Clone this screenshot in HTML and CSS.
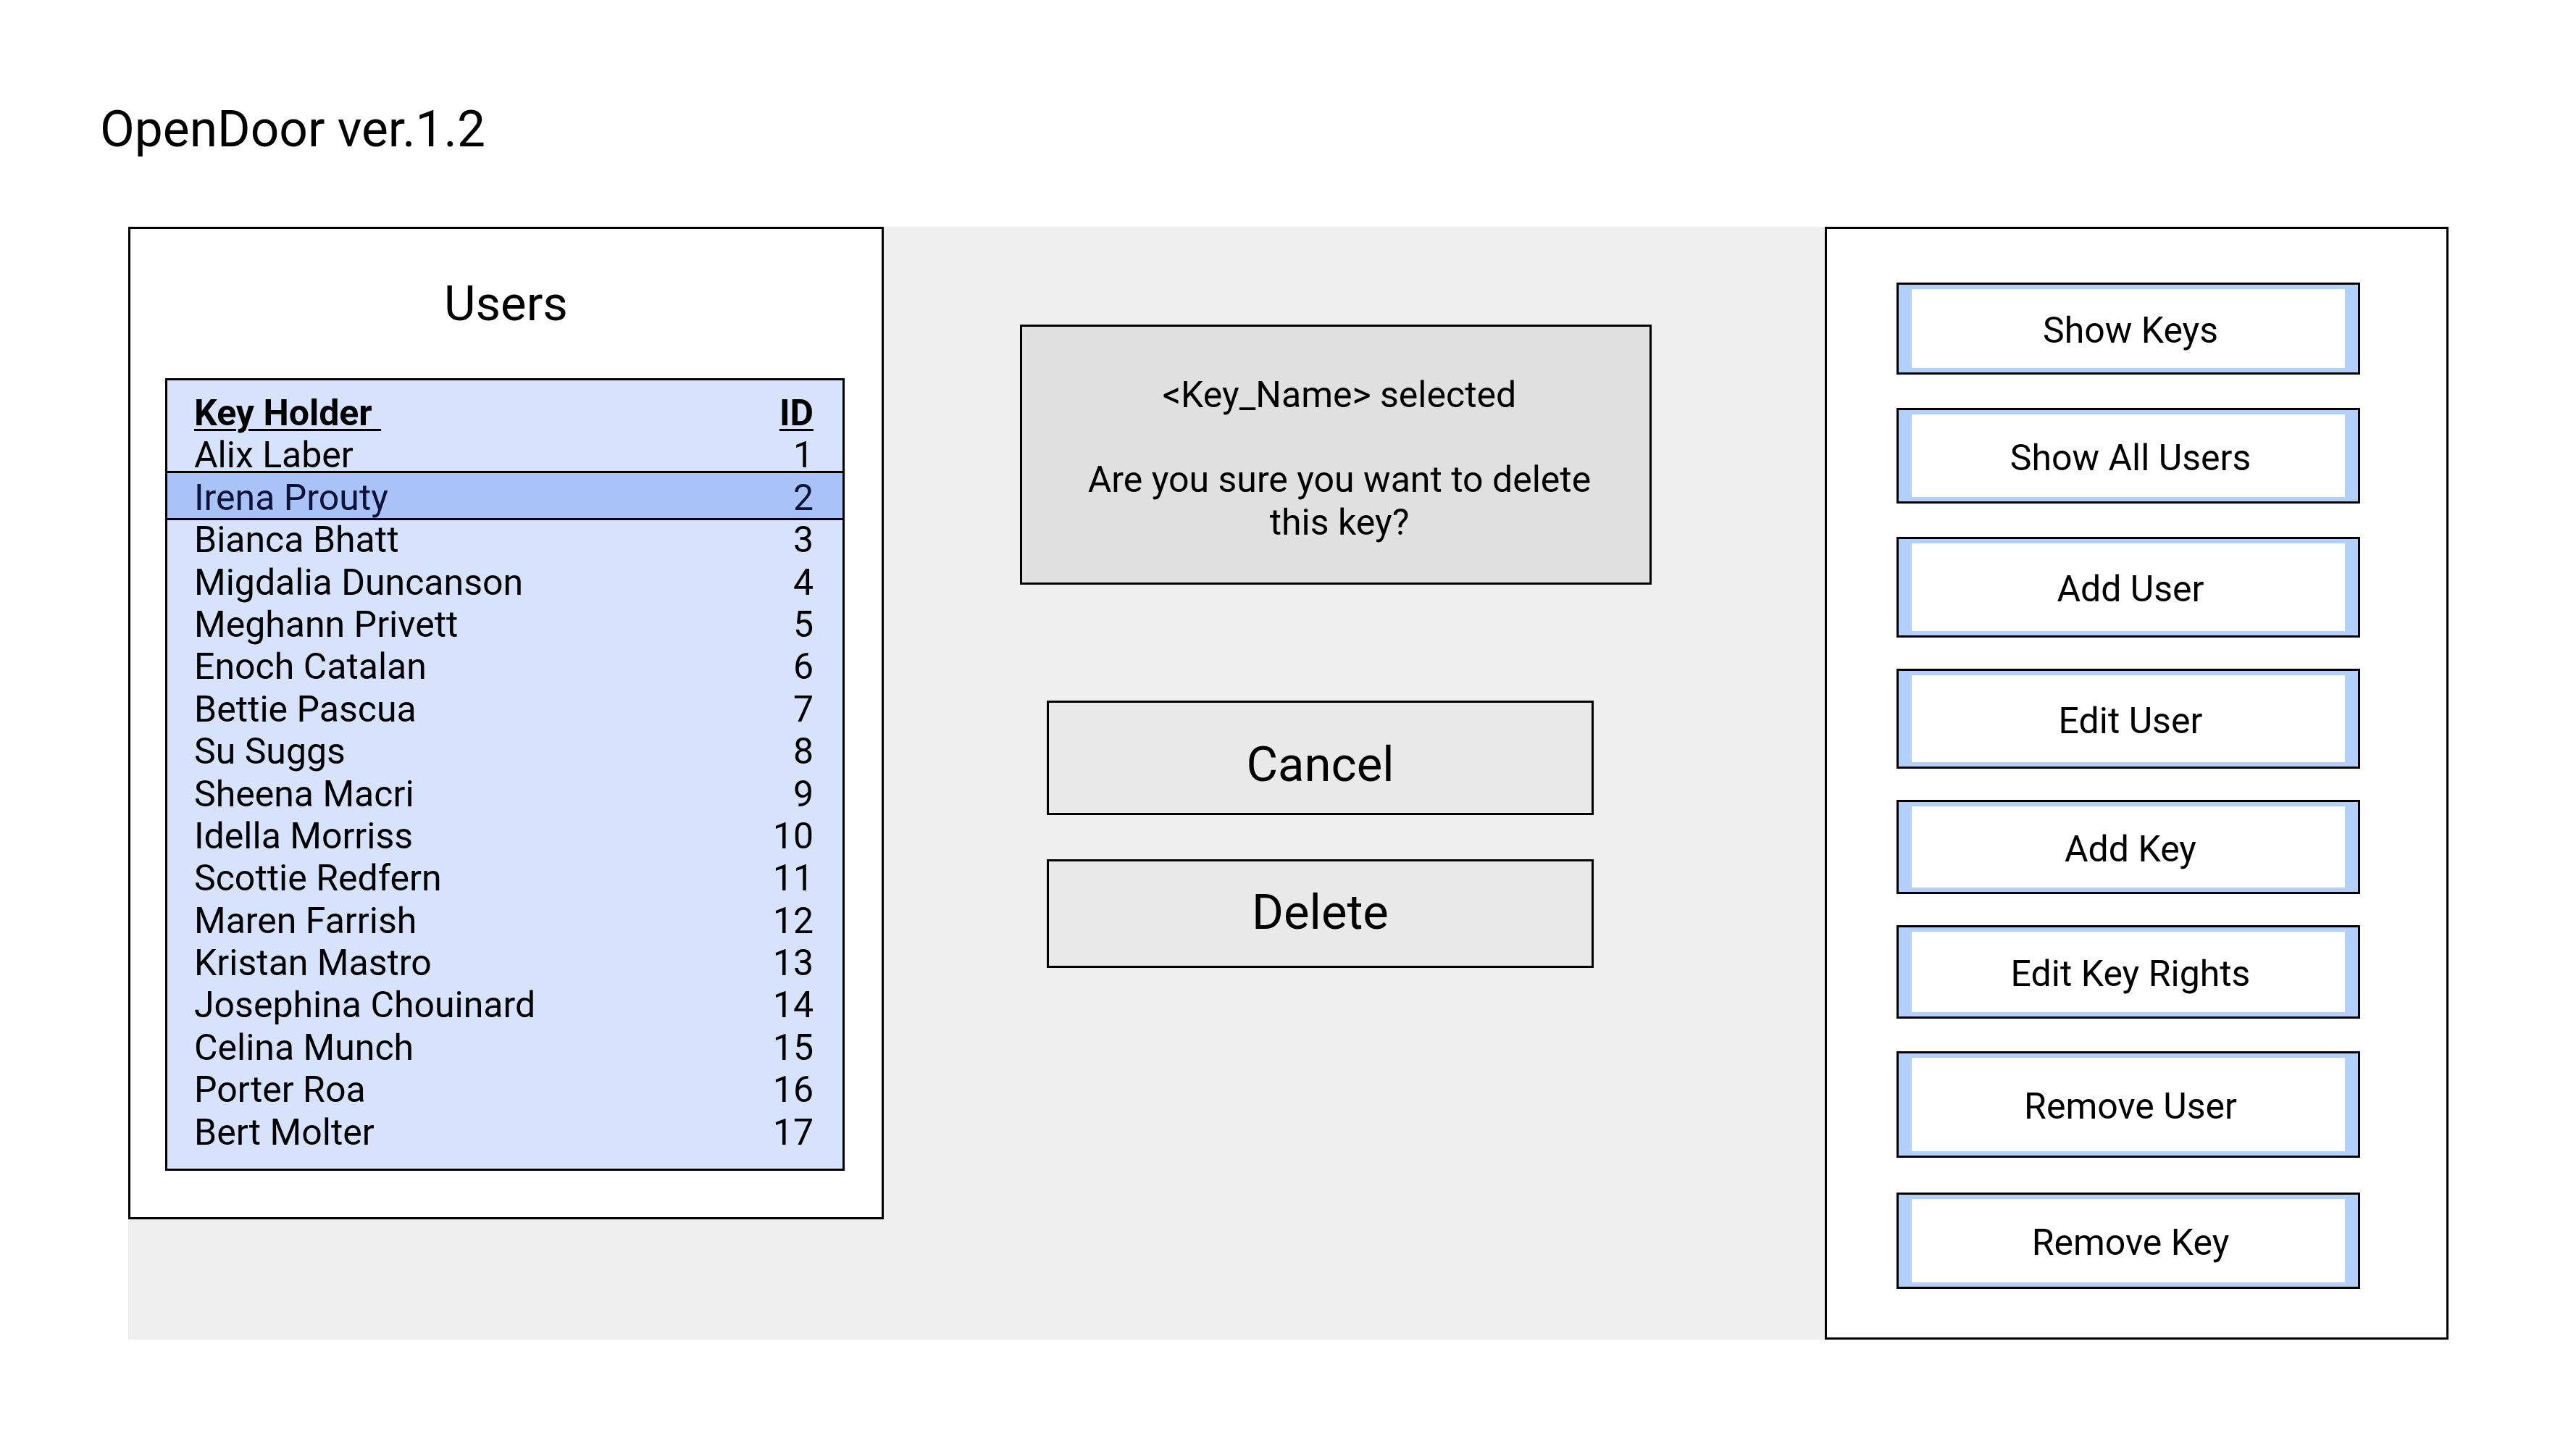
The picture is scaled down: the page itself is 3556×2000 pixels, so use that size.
FILE: index.html
```html
<!DOCTYPE html>
<html lang="en">
<head>
<meta charset="utf-8">
<title>OpenDoor ver.1.2</title>
<link rel="stylesheet" href="styles.css">
</head>
<body>
<h1 class="title">OpenDoor ver.1.2</h1>
<main class="stage">
  <section class="users-panel">
    <h2 class="users-title">Users</h2>
    <div class="user-table">
      <div class="row head"><span class="u">Key Holder&nbsp;</span><span class="u">ID</span></div>
      <div class="row"><span>Alix Laber</span><span>1</span></div>
      <div class="row selected"><span>Irena Prouty</span><span>2</span></div>
      <div class="row"><span>Bianca Bhatt</span><span>3</span></div>
      <div class="row"><span>Migdalia Duncanson</span><span>4</span></div>
      <div class="row"><span>Meghann Privett</span><span>5</span></div>
      <div class="row"><span>Enoch Catalan</span><span>6</span></div>
      <div class="row"><span>Bettie Pascua</span><span>7</span></div>
      <div class="row"><span>Su Suggs</span><span>8</span></div>
      <div class="row"><span>Sheena Macri</span><span>9</span></div>
      <div class="row"><span>Idella Morriss</span><span>10</span></div>
      <div class="row"><span>Scottie Redfern</span><span>11</span></div>
      <div class="row"><span>Maren Farrish</span><span>12</span></div>
      <div class="row"><span>Kristan Mastro</span><span>13</span></div>
      <div class="row"><span>Josephina Chouinard</span><span>14</span></div>
      <div class="row"><span>Celina Munch</span><span>15</span></div>
      <div class="row"><span>Porter Roa</span><span>16</span></div>
      <div class="row"><span>Bert Molter</span><span>17</span></div>
    </div>
  </section>
  <section class="center">
    <div class="dialog">
      <p>&lt;Key_Name&gt; selected</p>
      <p class="question">Are you sure you want to delete<br>this key?</p>
    </div>
    <div class="action cancel">Cancel</div>
    <div class="action delete">Delete</div>
  </section>
  <aside class="menu">
    <div class="menu-btn"><div class="menu-face">Show Keys</div></div>
    <div class="menu-btn"><div class="menu-face">Show All Users</div></div>
    <div class="menu-btn"><div class="menu-face">Add User</div></div>
    <div class="menu-btn"><div class="menu-face">Edit User</div></div>
    <div class="menu-btn"><div class="menu-face">Add Key</div></div>
    <div class="menu-btn"><div class="menu-face">Edit Key Rights</div></div>
    <div class="menu-btn"><div class="menu-face">Remove User</div></div>
    <div class="menu-btn"><div class="menu-face">Remove Key</div></div>
  </aside>
</main>
</body>
</html>
```

FILE: styles.css
```css
* {
  box-sizing: border-box;
}

body {
  margin: 0;
  width: 3556px;
  height: 2000px;
  overflow: hidden;
  background: #ffffff;
  color: #000000;
  font-family: Roboto, "Liberation Sans", sans-serif;
}

.title {
  margin: 0;
  height: 313px;
  padding: 137px 0 0 138px;
  font-size: 69.5px;
  font-weight: 400;
  line-height: 83px;
}

.stage {
  display: flex;
  align-items: flex-start;
  margin-left: 177px;
  width: 3203px;
  height: 1536px;
  background: #f0eff0;
}

/* Users panel */
.users-panel {
  width: 1043px;
  height: 1370px;
  border: 3px solid #000;
  background: #ffffff;
  padding-top: 64px;
}

.users-title {
  margin: 0 0 64px;
  font-size: 67px;
  font-weight: 400;
  line-height: 78px;
  text-align: center;
}

.user-table {
  margin-left: 48px;
  width: 938px;
  height: 1094px;
  border: 3px solid #000;
  background: #d7e3fc;
  padding-top: 16px;
}

.row {
  display: flex;
  justify-content: space-between;
  height: 58.4px;
  padding: 0 40px 0 37px;
  font-size: 50px;
  line-height: 58.4px;
  white-space: nowrap;
}

.row.head {
  font-weight: 700;
}

.u {
  text-decoration: underline;
  text-decoration-thickness: 3px;
  text-underline-offset: 5px;
}

.row.selected {
  margin: -8px -3px -1.6px;
  height: 68px;
  border: 3px solid #000;
  padding: 5px 40px 0 37px;
  background: #a9c3f8;
  color: #0d1238;
}

/* Center column */
.center {
  display: flex;
  flex-direction: column;
  align-items: flex-start;
  width: 1299px;
  height: 100%;
  padding-top: 135px;
}

.dialog {
  margin-left: 188px;
  width: 872px;
  height: 359px;
  border: 3px solid #000;
  background: #e0e0e0;
  padding: 65px 0 0 10px;
  text-align: center;
  font-size: 50px;
  line-height: 58.5px;
}

.dialog p {
  margin: 0;
}

.dialog .question {
  margin-top: 58.5px;
}

.action {
  display: flex;
  align-items: center;
  justify-content: center;
  margin-left: 225px;
  width: 755px;
  border: 3px solid #000;
  background: #e9e9e9;
  font-size: 67px;
  line-height: 78px;
}

.cancel {
  margin-top: 160px;
  height: 158px;
  padding-top: 17px;
}

.delete {
  margin-top: 61px;
  height: 150px;
  padding-bottom: 5px;
}

/* Right menu */
.menu {
  width: 861px;
  height: 1536px;
  border: 3px solid #000;
  background: #ffffff;
  padding-left: 96px;
}

.menu-btn {
  width: 640px;
  border: 3px solid #000;
  background: #b3cffb;
  padding: 6px 18px;
}

.menu-face {
  display: flex;
  align-items: center;
  justify-content: center;
  height: 100%;
  background: #ffffff;
  padding: 6px 0 0 6px;
  font-size: 50px;
  line-height: 58.5px;
}

.menu-btn:nth-child(1) { margin-top: 74px; height: 127px; }
.menu-btn:nth-child(2) { margin-top: 46px; height: 132px; }
.menu-btn:nth-child(3) { margin-top: 46px; height: 139px; }
.menu-btn:nth-child(4) { margin-top: 43px; height: 138px; }
.menu-btn:nth-child(5) { margin-top: 43px; height: 130px; }
.menu-btn:nth-child(6) { margin-top: 43px; height: 129px; }
.menu-btn:nth-child(7) { margin-top: 45px; height: 147px; }
.menu-btn:nth-child(8) { margin-top: 48px; height: 133px; }
```
